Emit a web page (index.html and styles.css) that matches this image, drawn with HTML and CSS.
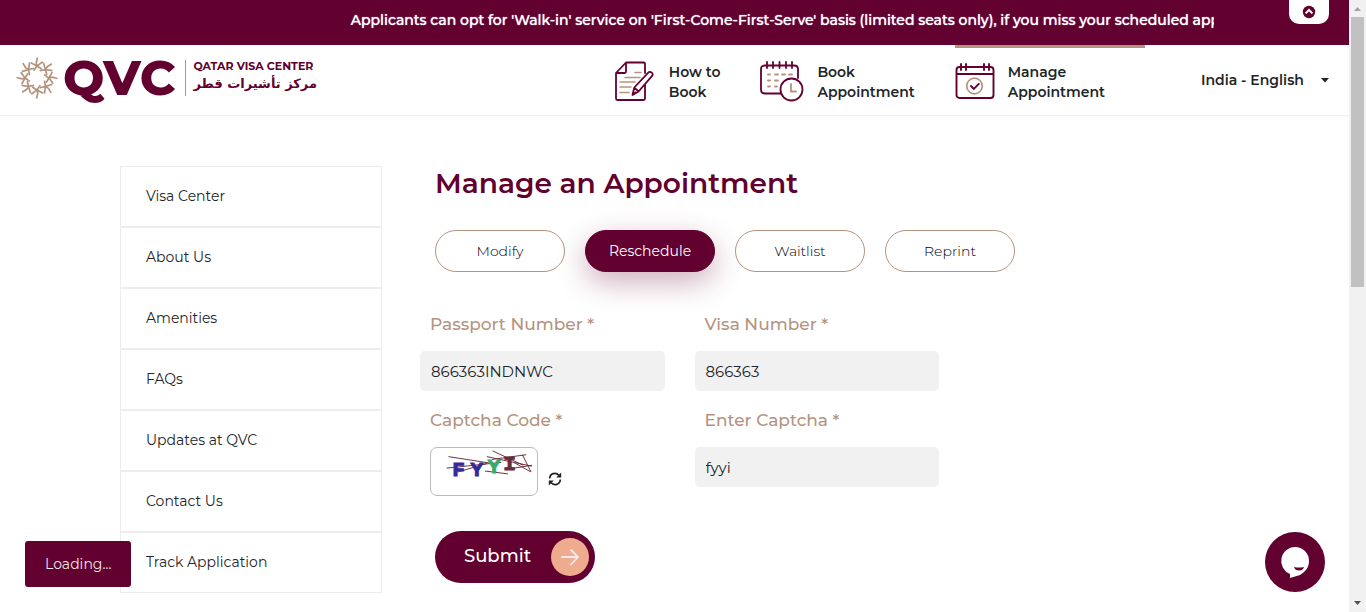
FILE: index.html
```html
<!DOCTYPE html>
<html lang="en">
<head>
<meta charset="utf-8">
<meta name="viewport" content="width=device-width, initial-scale=1">
<title>Manage an Appointment - Qatar Visa Center</title>
<link rel="stylesheet" href="styles.css">
</head>
<body>
<div class="notice">
  <p class="notice-text">Applicants can opt for 'Walk-in' service on 'First-Come-First-Serve' basis (limited seats only), if you miss your scheduled appointment</p>
  <button class="notice-toggle" type="button" aria-label="Hide notice">
    <svg width="14" height="14" viewBox="0 0 14 14"><circle cx="7" cy="7" r="6.2" fill="#62002f"/><path d="M3.6 8.4 7 5l3.4 3.4" fill="none" stroke="#fff" stroke-width="2"/></svg>
  </button>
</div>

<header class="header">
  <a class="logo" href="#" aria-label="Qatar Visa Center">
    <svg class="emblem" width="42" height="44" viewBox="-22 -22 44 44" fill="none" stroke="#b5947f" stroke-width="1.8">
      <defs><path id="ray" d="M.5-21.500-.8-16 0-12M-6.500-16 0-12.500 6-17M0-12.500-3.500-7.500M0-12.500 5-9.500"/></defs>
      <use href="#ray"/><use href="#ray" transform="rotate(45)"/><use href="#ray" transform="rotate(90)"/><use href="#ray" transform="rotate(135)"/><use href="#ray" transform="rotate(180)"/><use href="#ray" transform="rotate(225)"/><use href="#ray" transform="rotate(270)"/><use href="#ray" transform="rotate(315)"/>
    </svg>
    <span class="logo-mark">QVC</span>
    <span class="logo-names">
      <span class="logo-en">QATAR VISA CENTER</span>
      <span class="logo-ar" lang="ar" dir="rtl">مركز تأشيرات قطر</span>
    </span>
  </a>
  <nav class="nav">
    <a class="nav-item" href="#">
      <svg width="42" height="42" viewBox="0 0 42 42" fill="none" stroke="#62002f" stroke-width="1.8" stroke-linecap="round" stroke-linejoin="round">
        <path d="M31 13V4q0-1.500-1.500-1.500H12L2 13v25.500Q2 40 3.500 40h26q1.500 0 1.500-1.500V25M12 3v8.500q0 1.500-1.500 1.500H2.500"/>
        <path d="M21 12.500h6M11 17.500h15M6 22h15M6 27h11M6 32.500h9" stroke="#b5947f" stroke-width="1.600"/>
        <path d="m18.500 35 1.800-7.500L34 12.800q1.800-1.800 3.700-.2t.2 3.600L24.500 31.500zM20.500 28l4 3.300M19 34.500l2.500-2" fill="#fff"/>
      </svg>
      <span>How to<br>Book</span>
    </a>
    <a class="nav-item" href="#">
      <svg width="44" height="42" viewBox="0 0 44 42" fill="none" stroke="#62002f" stroke-width="1.800" stroke-linecap="round">
        <path d="M23 33.500H5q-4 0-4-4V9q0-3.500 4-3.500h29q4 0 4 3.500v9M7 2v6M13 2v6M19.500 2v6M26 2v6M32 2v6"/>
        <path d="M8 14.500h2M15 14.500h3M22 14.500h3M29 14.500h3M8 20.500h2M15 20.500h3M8 26.500h2M15 26.500h2" stroke="#b5947f" stroke-width="1.800"/>
        <circle cx="31.500" cy="29.500" r="11" fill="#fff"/><path d="M31 24v7.500h5" stroke="#b5947f"/>
      </svg>
      <span>Book<br>Appointment</span>
    </a>
    <a class="nav-item active" href="#">
      <svg width="40" height="42" viewBox="0 0 40 42" fill="none" stroke="#62002f" stroke-width="1.900" stroke-linecap="round">
        <rect x="1.500" y="7" width="37" height="31" rx="3"/><path d="M2 14h36"/><path d="M6 4v6M11 4v6M29 4v6M34 4v6"/>
        <circle cx="19.500" cy="26" r="7.800" stroke="#b5947f" stroke-width="1.700"/><path d="m16 26 2.800 2.800 5-5" stroke-width="1.900"/>
      </svg>
      <span>Manage<br>Appointment</span>
    </a>
  </nav>
  <label class="language">
    <select aria-label="Country and language"><option>India - English</option></select>
    <svg width="8" height="5" viewBox="0 0 8 5"><path d="M0 0h8L4 4.500z" fill="#212529"/></svg>
  </label>
</header>

<div class="page">
  <nav class="side" aria-label="Sections">
    <a href="#">Visa Center</a>
    <a href="#">About Us</a>
    <a href="#">Amenities</a>
    <a href="#">FAQs</a>
    <a href="#">Updates at QVC</a>
    <a href="#">Contact Us</a>
    <a href="#">Track Application</a>
  </nav>
  <main class="main">
    <h1>Manage an Appointment</h1>
    <div class="tabs">
      <button type="button">Modify</button>
      <button type="button" class="selected">Reschedule</button>
      <button type="button">Waitlist</button>
      <button type="button">Reprint</button>
    </div>
    <form class="form">
      <div class="fields">
        <div class="field">
          <label for="passport">Passport Number *</label>
          <input id="passport" type="text" value="866363INDNWC">
        </div>
        <div class="field">
          <label for="visa">Visa Number *</label>
          <input id="visa" type="text" value="866363">
        </div>
        <div class="field">
          <span class="field-title">Captcha Code *</span>
          <div class="captcha">
            <svg class="captcha-image" width="108" height="49" viewBox="0 0 108 49" role="img" aria-label="Captcha">
              <g fill="none" stroke="#682b38">
                <path d="M17 9l45 7M15 21l57-6M27 25l30-9M63 3l32 15M57 9l47 10M55 24l24 3M62 12l36-5M94 7l9 18M85 15l18 10M85 21l19-3"/>
              </g>
              <g class="captcha-letters">
                <text x="21" y="29" fill="#312b9b" stroke="#312b9b">F</text><text x="40" y="29" fill="#312b9b" stroke="#312b9b">Y</text><text x="58" y="26" fill="#35ad69" stroke="#35ad69">Y</text><text x="74" y="23" fill="#682b38" stroke="#682b38">I</text>
              </g>
            </svg>
            <button type="button" class="refresh" aria-label="Refresh captcha">
              <svg width="14" height="14" viewBox="0 0 14 14" fill="none" stroke="#212529" stroke-width="1.700"><path d="M1.700 6.500A5.200 5.200 0 0 1 11 3.400M12.300 7.500A5.200 5.200 0 0 1 3 10.600"/><path d="M13.200.6v5H8.200zM.8 13.400v-5h5z" fill="#212529" stroke="none"/></svg>
            </button>
          </div>
        </div>
        <div class="field">
          <label for="captcha">Enter Captcha *</label>
          <input id="captcha" type="text" value="fyyi">
        </div>
      </div>
      <button class="submit" type="button">
        <span>Submit</span>
        <svg width="38" height="38" viewBox="0 0 38 38" fill="none" stroke="#f5e9ec" stroke-width="1.800" stroke-linecap="round"><circle cx="19" cy="19" r="19" fill="#efab8d" stroke="none"/><path d="M11 19h16M20 12l7 7-7 7.500"/></svg>
      </button>
    </form>
  </main>
</div>

<div class="loading" role="status">Loading...</div>
<button class="chat" type="button" aria-label="Open chat">
  <svg width="60" height="60" viewBox="0 0 60 60"><circle cx="30" cy="30" r="30" fill="#62002f"/><path d="M30 15a14 14 0 0 1 14 14c0 7-4 11-9 14l-10 3v-4a14 14 0 0 1 5-27z" fill="#fff"/><path d="M29 35q5 1 10 0-1 3.500-5 3.500T29 35z" fill="#62002f"/></svg>
</button>
<div class="scrollbar" aria-hidden="true">
  <svg width="17" height="17" viewBox="0 0 17 17"><path d="M5 11h7L8.500 7z" fill="#a3a3a3"/></svg>
  <span class="scroll-thumb"></span>
  <svg class="scroll-down" width="17" height="17" viewBox="0 0 17 17"><path d="M5 6h7l-3.500 4z" fill="#505050"/></svg>
</div>
</body>
</html>
```
FILE: styles.css
```css
* { box-sizing: border-box; }
body {
  margin: 0;
  padding-right: 17px;
  overflow: hidden;
  background: #fff;
  color: #212529;
  font-family: Montserrat, Inter, "Noto Sans", sans-serif;
  font-size: 14px;
}
a { color: inherit; text-decoration: none; }
button { font: inherit; border: 0; padding: 0; cursor: pointer; }
svg { display: block; flex: none; }

.notice {
  position: relative;
  height: 45px;
  padding: 0 10%;
  background: #62002f;
  color: #fff;
}
.notice-text {
  margin: 0;
  padding-left: 20%;
  overflow: hidden;
  white-space: nowrap;
  font-size: 14px;
  font-weight: 500;
  line-height: 40px;
  text-shadow: 0 0 1px #fff;
}
.notice-toggle {
  position: absolute;
  top: 0;
  right: 20px;
  display: grid;
  place-items: center;
  width: 40px;
  height: 24px;
  border-radius: 0 0 10px 10px;
  background: #fff;
}

.header {
  display: flex;
  height: 71px;
  padding: 0 20px 0 16px;
  border-bottom: 1px solid #f0f0f0;
  box-shadow: 0 1px 2px rgba(0, 0, 0, .04);
}
.logo { display: flex; align-items: center; height: 66px; color: #62002f; }
.logo-mark { margin-left: 5px; font-size: 49px; font-weight: 800; line-height: 60px; }
.logo-names {
  display: flex;
  flex-direction: column;
  height: 36px;
  margin-left: 10px;
  padding-left: 7px;
  border-left: 1px solid #b5947f;
}
.logo-en { font-size: 11px; font-weight: 700; line-height: 12px; }
.logo-ar { font-family: "DejaVu Sans", sans-serif; font-size: 13px; font-weight: 700; line-height: 24px; }

.nav { display: flex; margin-left: auto; }
.nav-item {
  display: flex;
  gap: 13px;
  padding: 12px 40px 0 0;
  border-top: 3px solid transparent;
  font-size: 14px;
  font-weight: 600;
  line-height: 20px;
}
.nav-item span { padding-top: 2px; }
.nav-item.active { border-color: #b5947f; }
.language { display: flex; align-items: center; margin-left: 56px; }
.language select {
  appearance: none;
  width: 120px;
  padding: 0;
  border: 0;
  background: none;
  color: inherit;
  font: inherit;
  font-weight: 600;
}

.page { display: flex; gap: 38px; padding: 50px 15px 0 120px; }
.side { flex: none; width: 262px; }
.side a {
  display: block;
  padding-left: 25px;
  border: 1px solid #ededed;
  line-height: 59px;
}
.main { flex: 1; min-width: 0; }
.main h1 {
  margin: 0;
  padding-left: 15px;
  color: #62002f;
  font-size: 28px;
  font-weight: 600;
  line-height: 34px;
}
.tabs { display: flex; flex-wrap: wrap; gap: 20px; margin: 30px 0 0 15px; }
.tabs button {
  width: 130px;
  height: 42px;
  border: 1px solid #b5947f;
  border-radius: 21px;
  background: #fff;
  color: #000;
  font-weight: 300;
}
.tabs .selected {
  border-color: #62002f;
  background: #62002f;
  box-shadow: 0 10px 30px rgba(98, 0, 47, .32);
  color: #fff;
  font-weight: 400;
}
.form { margin-top: 38px; }
.fields { display: grid; grid-template-columns: 1fr 1fr; gap: 15px 30px; max-width: 519px; }
.field label, .field-title {
  display: block;
  padding-left: 10px;
  margin-bottom: 13px;
  color: #b5947f;
  font-size: 17px;
  font-weight: 500;
  line-height: 28px;
}
.field input {
  display: block;
  width: 100%;
  height: 40px;
  padding: 0 11px;
  border: 0;
  border-radius: 5px;
  background: #f1f1f1;
  color: #212529;
  font: inherit;
  font-size: 15px;
}
.captcha { display: flex; align-items: center; gap: 10px; padding-left: 10px; }
.captcha-image { border: 1px solid #bbb; border-radius: 7px; }
.captcha-letters { font: bold 22px "Liberation Mono", monospace; }
.refresh { padding-top: 14px; background: none; }
.submit {
  display: flex;
  align-items: center;
  justify-content: space-between;
  width: 160px;
  height: 52px;
  margin: 35px 0 0 15px;
  padding: 0 6px 0 29px;
  border-radius: 26px;
  background: #62002f;
  color: #fff;
  font-size: 18px;
  font-weight: 500;
}
.submit span { padding-bottom: 2px; }

.loading {
  position: fixed;
  left: 25px;
  bottom: 25px;
  padding: 0 20px;
  border-radius: 3px;
  background: #62002f;
  color: #efe4e9;
  line-height: 46px;
}
.chat { position: fixed; right: 41px; bottom: 20px; border-radius: 50%; background: none; }
.scrollbar {
  position: fixed;
  top: 0;
  right: 0;
  bottom: 0;
  display: flex;
  flex-direction: column;
  width: 17px;
  background: #f1f1f1;
}
.scroll-thumb { height: 270px; margin: 0 2px; background: #c1c1c1; }
.scroll-down { margin-top: auto; }
```
